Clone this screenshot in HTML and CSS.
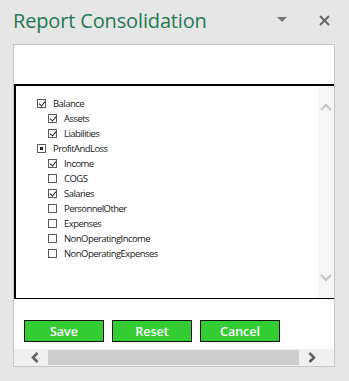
FILE: index.html
```html
<!DOCTYPE html>
<html>
<head>
<meta charset="utf-8">
<link rel="stylesheet" href="styles.css">
</head>
<body>
<div class="header">
  <div class="title">Report Consolidation</div>
  <div class="header-icons">
    <svg class="dd" width="10" height="6" viewBox="0 0 10 6"><path d="M0 0H10L5 5Z" fill="#777"/></svg>
    <svg class="close" width="11" height="11" viewBox="0 0 11 11"><path d="M1 1L10 10M10 1L1 10" stroke="#666" stroke-width="2"/></svg>
  </div>
</div>
<div class="panel">
  <div class="top-space"></div>
  <div class="listbox">
    <div class="tree">
      <div class="row lvl0"><span class="cb checked"></span><span class="lbl">Balance</span></div>
      <div class="row lvl1"><span class="cb checked"></span><span class="lbl">Assets</span></div>
      <div class="row lvl1"><span class="cb checked"></span><span class="lbl">Liabilities</span></div>
      <div class="row lvl0"><span class="cb partial"></span><span class="lbl">ProfitAndLoss</span></div>
      <div class="row lvl1"><span class="cb checked"></span><span class="lbl">Income</span></div>
      <div class="row lvl1"><span class="cb"></span><span class="lbl">COGS</span></div>
      <div class="row lvl1"><span class="cb checked"></span><span class="lbl">Salaries</span></div>
      <div class="row lvl1"><span class="cb"></span><span class="lbl">PersonnelOther</span></div>
      <div class="row lvl1"><span class="cb"></span><span class="lbl">Expenses</span></div>
      <div class="row lvl1"><span class="cb"></span><span class="lbl">NonOperatingIncome</span></div>
      <div class="row lvl1"><span class="cb"></span><span class="lbl">NonOperatingExpenses</span></div>
    </div>
    <div class="vscroll">
      <svg width="12" height="8" viewBox="0 0 12 8"><path d="M1 7L6 2L11 7" fill="none" stroke="#c4c4c4" stroke-width="2.2"/></svg>
      <svg width="12" height="8" viewBox="0 0 12 8"><path d="M1 1L6 6L11 1" fill="none" stroke="#c4c4c4" stroke-width="2.2"/></svg>
    </div>
  </div>
  <div class="buttons">
    <button class="btn">Save</button>
    <button class="btn">Reset</button>
    <button class="btn">Cancel</button>
  </div>
  <div class="hscroll">
    <svg class="arr" width="8" height="11" viewBox="0 0 8 11"><path d="M6.5 1L2 5.5L6.5 10" fill="none" stroke="#606060" stroke-width="2.6"/></svg>
    <div class="thumb"></div>
    <svg class="arr" width="8" height="11" viewBox="0 0 8 11"><path d="M1.5 1L6 5.5L1.5 10" fill="none" stroke="#606060" stroke-width="2.6"/></svg>
  </div>
</div>
</body>
</html>
```
FILE: styles.css
```css
html, body {
  margin: 0;
  padding: 0;
  background: #e6e6e6;
  font-family: "Open Sans", "Noto Sans", sans-serif;
}
body {
  width: 349px;
  height: 381px;
  overflow: hidden;
}
.header {
  height: 44px;
  display: flex;
  align-items: flex-start;
  justify-content: space-between;
  padding-left: 13px;
  box-sizing: border-box;
}
.title {
  margin-top: 8px;
  font-size: 20px;
  font-weight: 400;
  color: #217a50;
  letter-spacing: -0.15px;
  line-height: 26px;
}
.header-icons {
  display: flex;
  align-items: center;
  margin-top: 15px;
  margin-right: 19px;
}
.dd {
  margin-right: 32px;
  margin-top: -2px;
}
.panel {
  margin-left: 13px;
  width: 322px;
  height: 323px;
  box-sizing: border-box;
  border: 1px solid #c6c6c6;
  background: #fff;
  display: flex;
  flex-direction: column;
}
.top-space {
  height: 39px;
}
.listbox {
  height: 215px;
  box-sizing: border-box;
  border-top: 2px solid #000;
  border-left: 2px solid #000;
  border-bottom: 1px solid #000;
  display: flex;
}
.tree {
  flex: 1;
  padding-top: 10px;
  padding-left: 21px;
}
.row {
  height: 15px;
  display: flex;
  align-items: center;
  font-size: 9.5px;
  color: #1a1a1a;
  letter-spacing: -0.55px;
}
.lvl1 {
  padding-left: 11px;
}
.cb {
  width: 9px;
  height: 9px;
  box-sizing: border-box;
  border: 1px solid #5a5a5a;
  background: #fff;
  margin-right: 7px;
  position: relative;
  flex: none;
}
.cb.checked::after {
  content: "";
  position: absolute;
  left: 1.5px;
  top: 0px;
  width: 3px;
  height: 5px;
  border-right: 1.4px solid #222;
  border-bottom: 1.4px solid #222;
  transform: rotate(40deg);
}
.cb.partial::after {
  content: "";
  position: absolute;
  left: 2px;
  top: 2px;
  width: 3px;
  height: 3px;
  background: #222;
}
.vscroll {
  width: 16px;
  background: #f7f7f7;
  display: flex;
  flex-direction: column;
  justify-content: space-between;
  align-items: center;
  padding: 17px 0 16px;
}
.buttons {
  height: 50px;
  display: flex;
  align-items: flex-start;
  gap: 8px;
  padding-left: 10px;
  padding-top: 21px;
  box-sizing: border-box;
}
.btn {
  width: 80px;
  height: 22px;
  background: #33cc33;
  border: 1px solid #111;
  color: #fff;
  font-family: "Open Sans", "Noto Sans", sans-serif;
  font-weight: 600;
  font-size: 12.5px;
  padding: 0;
  line-height: 19px;
}
.hscroll {
  height: 17px;
  background: #f0f0f0;
  display: flex;
  align-items: center;
  padding: 0 18px 0 17px;
  gap: 0;
}
.arr {
  flex: none;
}
.thumb {
  flex: 1;
  height: 15px;
  margin: 0 9px;
  background: #cdcdcd;
}
```
